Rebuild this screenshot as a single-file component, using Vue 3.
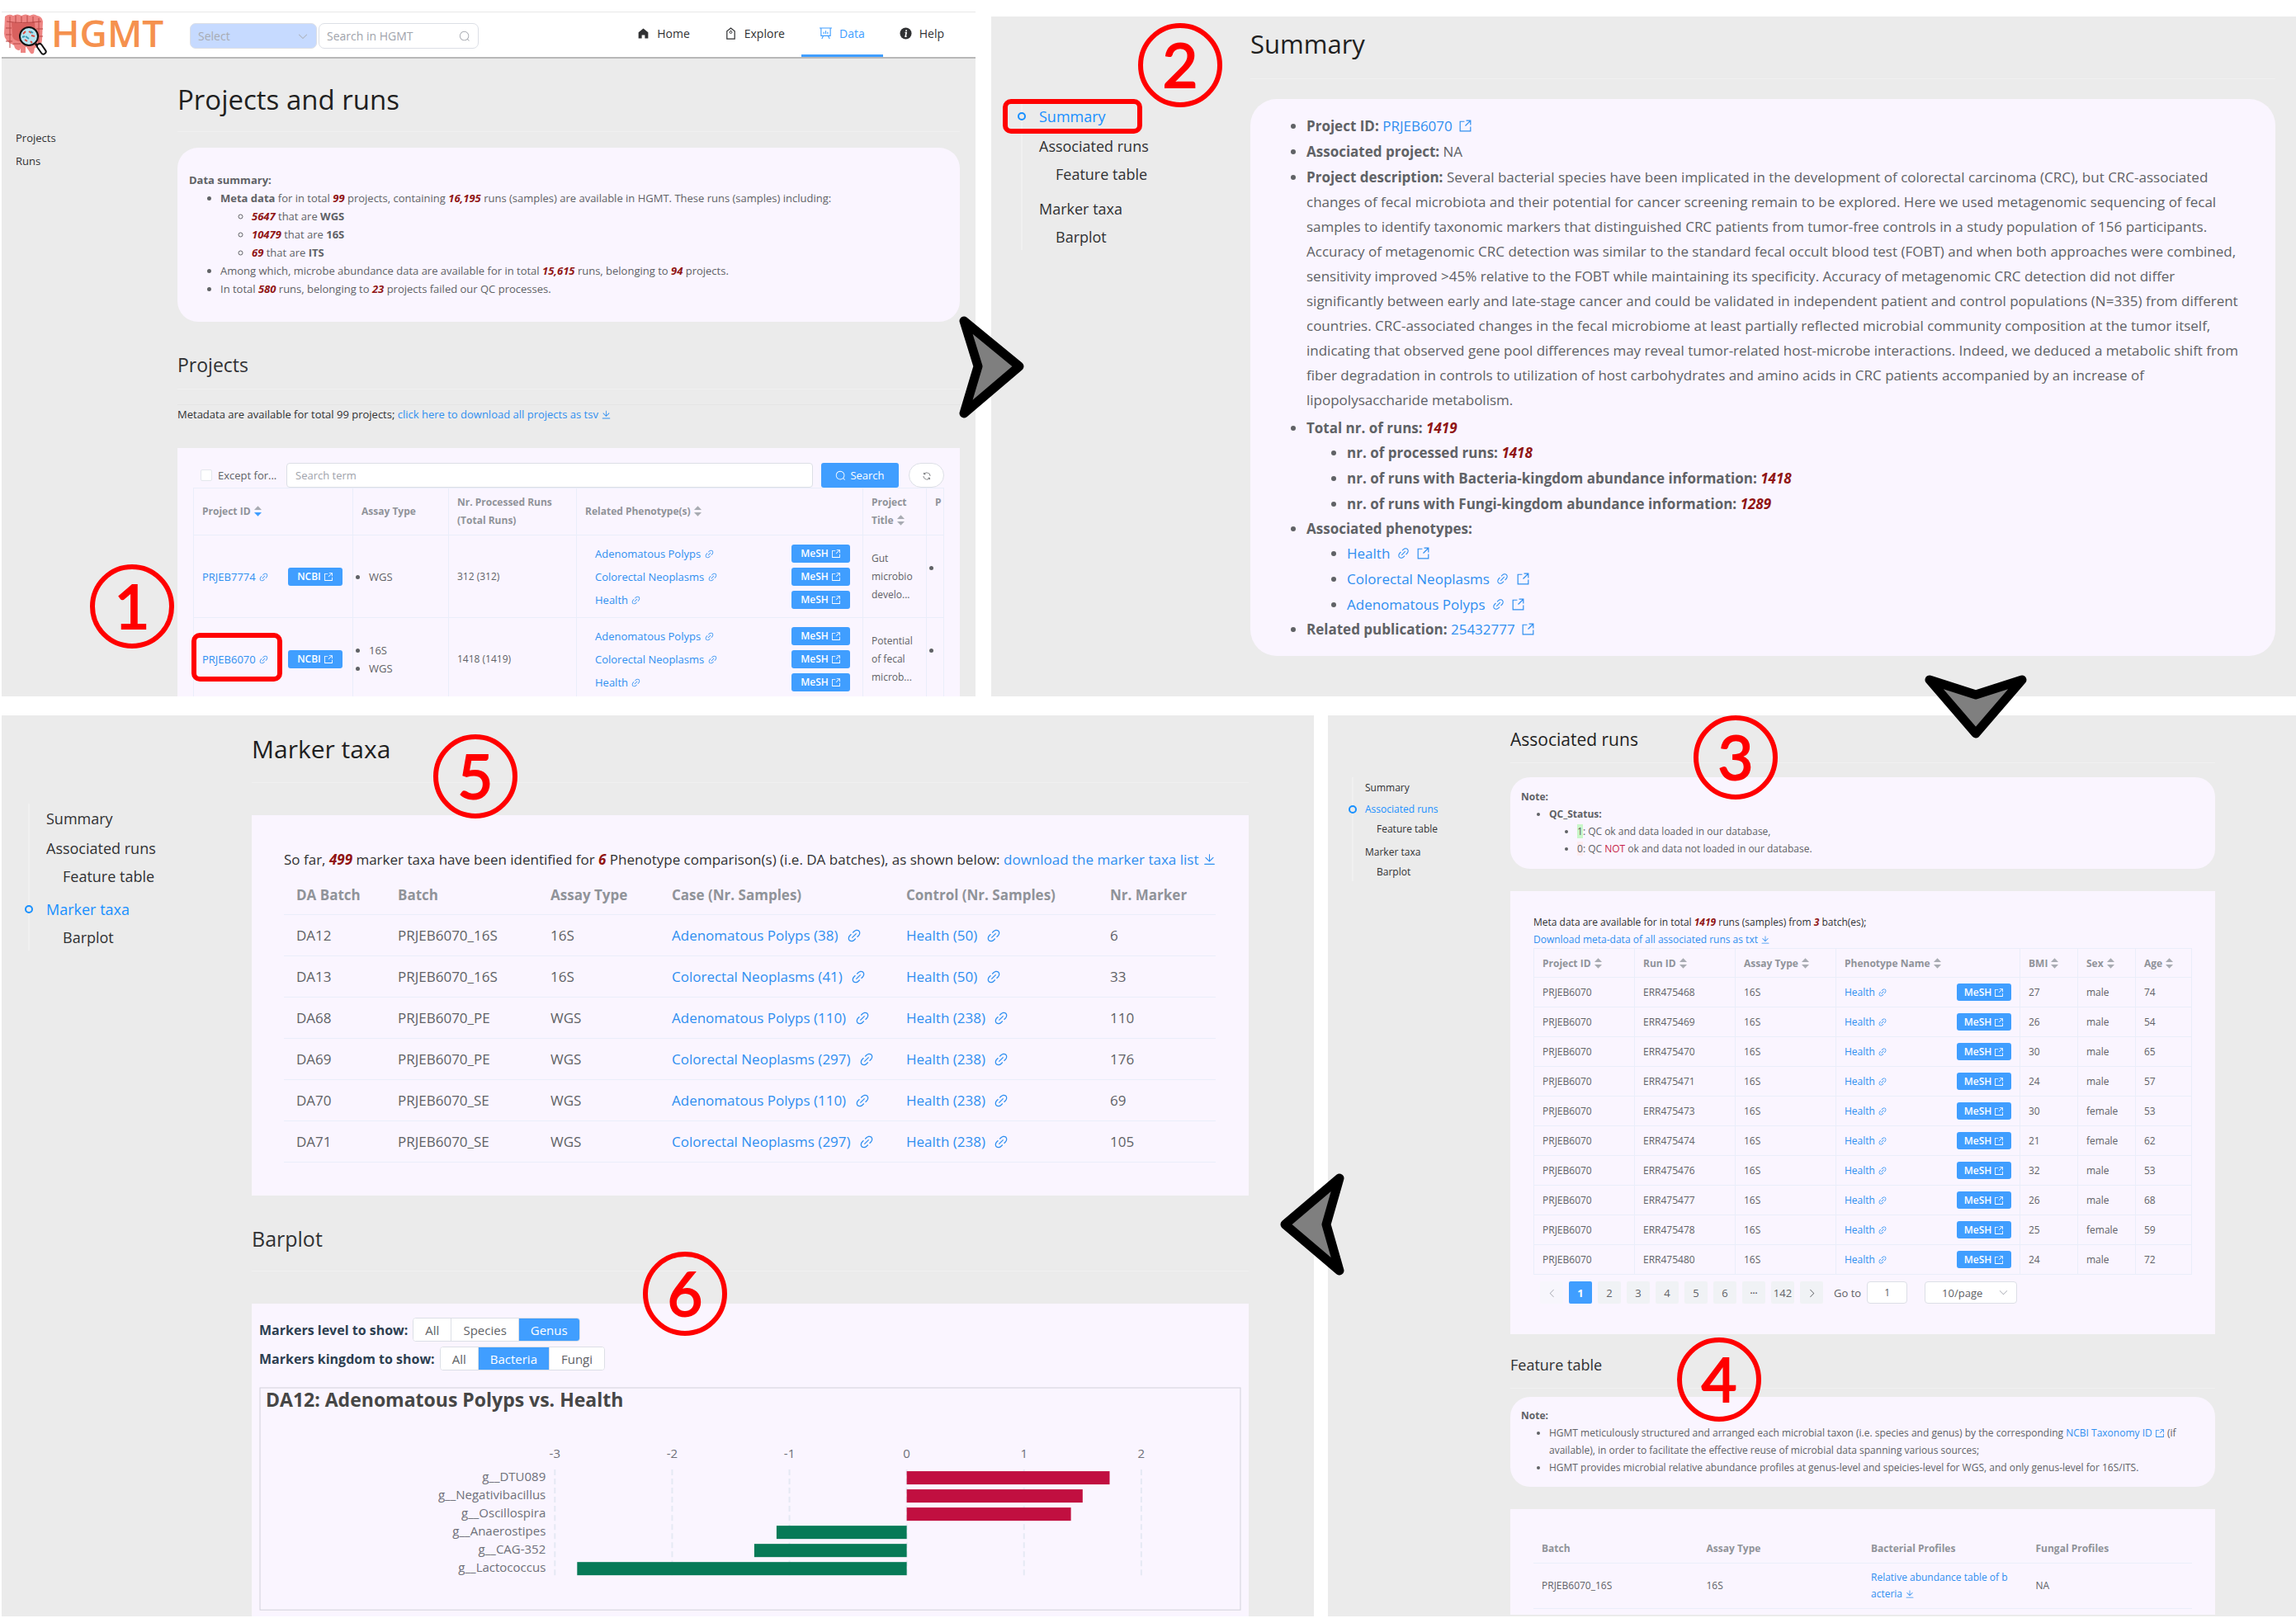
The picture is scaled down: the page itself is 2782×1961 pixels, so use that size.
<script setup>
import { h } from 'vue'

const glyphs = {
  link: 'M715.648 625.152 670.4 579.904l90.496-90.56c75.008-74.944 85.12-186.368 22.656-248.896-62.528-62.464-173.952-52.352-248.96 22.656L444.16 353.6l-45.248-45.248 90.496-90.496c100.032-99.968 251.968-110.08 339.456-22.656 87.488 87.488 77.312 239.424-22.656 339.456l-90.496 90.496zm-90.496 90.496-90.496 90.496C434.624 906.112 282.688 916.224 195.2 828.8c-87.488-87.488-77.312-239.424 22.656-339.456l90.496-90.496 45.248 45.248-90.496 90.56c-75.008 74.944-85.12 186.368-22.656 248.896 62.528 62.464 173.952 52.352 248.96-22.656l90.496-90.496 45.248 45.248zm0-362.048 45.248 45.248L398.848 670.4 353.6 625.152 625.152 353.6z',
  download: 'M160 832h704a32 32 0 1 1 0 64H160a32 32 0 1 1 0-64zm384-253.696 236.288-236.352 45.248 45.248L508.8 704 192 387.2l45.248-45.248L480 584.704V128h64v450.304z',
  search: 'm795.904 750.72 124.992 124.928a32 32 0 0 1-45.248 45.248L750.656 795.904a416 416 0 1 1 45.248-45.248zM480 832a352 352 0 1 0 0-704 352 352 0 0 0 0 704z',
  refresh: 'M771.776 794.88A384 384 0 0 1 128 512h64a320 320 0 0 0 555.712 216.448H654.72a32 32 0 1 1 0-64h149.056a32 32 0 0 1 32 32v148.928a32 32 0 1 1-64 0v-50.56zM276.288 295.616h92.992a32 32 0 0 1 0 64H220.16a32 32 0 0 1-32-32V178.56a32 32 0 0 1 64 0v50.56A384 384 0 0 1 896.128 512h-64a320 320 0 0 0-555.776-216.384z',
  down: 'M831.872 340.864 512 652.672 192.128 340.864a30.592 30.592 0 0 0-42.752 0 29.12 29.12 0 0 0 0 41.6L489.664 714.24a32 32 0 0 0 44.672 0l340.288-331.712a29.12 29.12 0 0 0 0-41.728 30.592 30.592 0 0 0-42.752 0z',
  external: 'M96 160h352v72H168v624h688V576h72v352H96zM576 96h352v352h-72V220L538 538l-52-52 318-318H576z',
  home: 'M512 96 112 420v508h272V640h256v288h272V420z'
}
const Icon = (props) =>
  h('svg', { class: 'ico', viewBox: '0 0 1024 1024', 'aria-hidden': 'true' }, [
    h('path', { d: glyphs[props.name], fill: 'currentColor' })
  ])
Icon.props = ['name']

const Sort = (props) =>
  h('svg', { class: 'sort', viewBox: '0 0 10 14', 'aria-hidden': 'true' }, [
    h('path', { d: 'M5 0 10 5.4H0z', fill: '#a8abb2' }),
    h('path', { d: 'M5 14 0 8.6h10z', fill: props.active ? '#409eff' : '#a8abb2' })
  ])
Sort.props = { active: Boolean }

const anchors = [
  { label: 'Summary' },
  { label: 'Associated runs' },
  { label: 'Feature table', sub: true },
  { label: 'Marker taxa' },
  { label: 'Barplot', sub: true }
]
const phenotypes = ['Adenomatous Polyps', 'Colorectal Neoplasms', 'Health']
const projects = [
  { id: 'PRJEB7774', assays: ['WGS'], runs: '312 (312)', title: ['Gut', 'microbio', 'develo...'] },
  { id: 'PRJEB6070', assays: ['16S', 'WGS'], runs: '1418 (1419)', title: ['Potential', 'of fecal', 'microb...'] }
]
const runs = [
  ['ERR475468', 27, 'male', 74],
  ['ERR475469', 26, 'male', 54],
  ['ERR475470', 30, 'male', 65],
  ['ERR475471', 24, 'male', 57],
  ['ERR475473', 30, 'female', 53],
  ['ERR475474', 21, 'female', 62],
  ['ERR475476', 32, 'male', 53],
  ['ERR475477', 26, 'male', 68],
  ['ERR475478', 25, 'female', 59],
  ['ERR475480', 24, 'male', 72]
]
const runColumns = ['Project ID', 'Run ID', 'Assay Type', 'Phenotype Name', 'BMI', 'Sex', 'Age']
const pages = ['2', '3', '4', '5', '6', '•••', '142']
const markers = [
  ['DA12', 'PRJEB6070_16S', '16S', 'Adenomatous Polyps (38)', 'Health (50)', 6],
  ['DA13', 'PRJEB6070_16S', '16S', 'Colorectal Neoplasms (41)', 'Health (50)', 33],
  ['DA68', 'PRJEB6070_PE', 'WGS', 'Adenomatous Polyps (110)', 'Health (238)', 110],
  ['DA69', 'PRJEB6070_PE', 'WGS', 'Colorectal Neoplasms (297)', 'Health (238)', 176],
  ['DA70', 'PRJEB6070_SE', 'WGS', 'Adenomatous Polyps (110)', 'Health (238)', 69],
  ['DA71', 'PRJEB6070_SE', 'WGS', 'Colorectal Neoplasms (297)', 'Health (238)', 105]
]
const zero = 784
const unit = 142
const ticks = [-3, -2, -1, 0, 1, 2]
const bars = [
  { name: 'g__DTU089', value: 1.73 },
  { name: 'g__Negativibacillus', value: 1.5 },
  { name: 'g__Oscillospira', value: 1.4 },
  { name: 'g__Anaerostipes', value: -1.11 },
  { name: 'g__CAG-352', value: -1.3 },
  { name: 'g__Lactococcus', value: -2.81 }
]
const levels = ['All', 'Species', 'Genus']
const kingdoms = ['All', 'Bacteria', 'Fungi']
</script>

<template>
  <div class="page">
    <div class="row row-top">
      <section class="panel projects">
        <header class="topbar">
          <a class="brand" href="#">
            <svg class="logo" viewBox="0 0 54 50" aria-hidden="true">
              <path d="M2 3q5-4 10-1 5-3 10 0 5-3 10 0 5-3 9 0 6 1 7 7l-1 22q0 9-9 10l-1 6q-3 3-5-1l-4-6q-7-1-8 4-6 0-7-6Q1 33 1 24z" fill="#ee8583" />
              <path d="M10 10q14 3 28-1l1 16q-3 9-15 8-11 1-13-6z" fill="#d8605e" />
              <path d="M4 9q18 3 42 0M8 3v38M15 2v9M22 3v8M29 2v9M36 3v8M43 5v33M3 17h7M3 25h7M3 33h8M40 18h8M39 27h9M12 36h27" stroke="#b94846" stroke-width="1" fill="none" />
              <path d="M24 33v14" stroke="#ee8583" stroke-width="6" />
              <circle cx="31" cy="27" r="11" fill="#b8e4f1" stroke="#111" stroke-width="2" />
              <path d="m24 24 3-3m4 0 3 2m-8 8 3 2m5-7 4 1m-5 6 2 2" stroke="#dd4c43" stroke-width="2" />
              <path d="m27 27 4 3m2-9 3 2m-10 4-3 1" stroke="#3b9db7" stroke-width="2" />
              <path d="m39 36 3 3" stroke="#111" stroke-width="3" />
              <rect x="41" y="36" width="6" height="14" rx="3" transform="rotate(-35 44 39)" fill="#fff" stroke="#111" stroke-width="2" />
            </svg>
            <span class="wordmark">HGMT</span>
          </a>
          <label class="field scope">
            <select aria-label="Scope"><option>Select</option></select>
            <Icon name="down" />
          </label>
          <label class="field finder">
            <input type="text" placeholder="Search in HGMT" aria-label="Search in HGMT" />
            <Icon name="search" />
          </label>
          <nav class="menu">
            <a href="#"><Icon name="home" />Home</a>
            <a href="#">
              <svg class="ico" viewBox="0 0 16 16" aria-hidden="true"><path d="M3 15V5l5-4 5 4v10zM8 4v1" fill="none" stroke="currentColor" stroke-width="1.3" /><circle cx="8" cy="6.500" r="1.500" fill="none" stroke="currentColor" /></svg>Explore</a>
            <a href="#" class="current">
              <svg class="ico" viewBox="0 0 16 16" aria-hidden="true"><path d="M0 1h16M2 1v10h12V1M5 11l-2 4m8-4 2 4M5.500 8.500V6M8 8.500V4.500m2.500 4V6" fill="none" stroke="currentColor" stroke-width="1.2" /></svg>Data</a>
            <a href="#">
              <svg class="ico" viewBox="0 0 16 16" aria-hidden="true"><circle cx="8" cy="8" r="7.500" fill="currentColor" /><path d="M8.600 3.500v1.800M7 7h1.700L7.600 12h1.600" fill="none" stroke="#fff" stroke-width="1.700" /></svg>Help</a>
          </nav>
        </header>
        <div class="body">
          <nav class="side plain">
            <a href="#">Projects</a>
            <a href="#">Runs</a>
          </nav>
          <main class="content">
            <h1 class="title">Projects and runs</h1>
            <div class="note">
              <b>Data summary:</b>
              <ul>
                <li><b>Meta data</b> for in total <em>99</em> projects, containing <em>16,195</em> runs (samples) are available in HGMT. These runs (samples) including:
                  <ul>
                    <li><em>5647</em> that are <b>WGS</b></li>
                    <li><em>10479</em> that are <b>16S</b></li>
                    <li><em>69</em> that are <b>ITS</b></li>
                  </ul>
                </li>
                <li>Among which, microbe abundance data are available for in total <em>15,615</em> runs, belonging to <em>94</em> projects.</li>
                <li>In total <em>580</em> runs, belonging to <em>23</em> projects failed our QC processes.</li>
              </ul>
            </div>
            <h2 class="subtitle">Projects</h2>
            <p class="meta">Metadata are available for total 99 projects; <a href="#">click here to download all projects as tsv <Icon name="download" /></a></p>
            <div class="card">
              <form class="toolbar" @submit.prevent>
                <label class="except"><input type="checkbox" />Except for...</label>
                <input class="term" type="text" placeholder="Search term" aria-label="Search term" />
                <button class="primary" type="submit"><Icon name="search" />Search</button>
                <button class="round" type="button" aria-label="Refresh"><Icon name="refresh" /></button>
              </form>
              <table class="grid">
                <colgroup>
                  <col class="w-id" /><col class="w-assay" /><col class="w-nr" /><col /><col class="w-title" /><col class="w-cut" />
                </colgroup>
                <thead>
                  <tr>
                    <th>Project ID <Sort active /></th>
                    <th>Assay Type</th>
                    <th>Nr. Processed Runs<br />(Total Runs)</th>
                    <th>Related Phenotype(s) <Sort /></th>
                    <th>Project<br />Title <Sort /></th>
                    <th class="cut">P<br />&nbsp;</th>
                  </tr>
                </thead>
                <tbody>
                  <tr v-for="p in projects" :key="p.id">
                    <td>
                      <div class="split"><a href="#">{{ p.id }} <Icon name="link" /></a><button class="tag" type="button">NCBI<Icon name="external" /></button></div>
                    </td>
                    <td><ul class="assays"><li v-for="a in p.assays" :key="a">{{ a }}</li></ul></td>
                    <td>{{ p.runs }}</td>
                    <td>
                      <div v-for="n in phenotypes" :key="n" class="split pheno"><a href="#">{{ n }} <Icon name="link" /></a><button class="tag" type="button">MeSH<Icon name="external" /></button></div>
                    </td>
                    <td><div v-for="t in p.title" :key="t">{{ t }}</div></td>
                    <td class="cut"><ul class="assays"><li>&nbsp;</li></ul></td>
                  </tr>
                </tbody>
              </table>
            </div>
          </main>
        </div>
        <span class="frame frame-id"></span>
        <span class="step s1">1</span>
      </section>

      <section class="panel summary">
        <div class="body">
          <nav class="side">
            <ul>
              <li v-for="a in anchors" :key="a.label" :class="{ sub: a.sub, on: a.label === 'Summary' }"><a href="#">{{ a.label }}</a></li>
            </ul>
          </nav>
          <main class="content">
            <h1 class="title">Summary</h1>
            <div class="note">
              <ul>
                <li><b>Project ID:</b> <a href="#">PRJEB6070 <Icon name="external" /></a></li>
                <li><b>Associated project:</b> NA</li>
                <li class="long"><b>Project description:</b> Several bacterial species have been implicated in the development of colorectal carcinoma (CRC), but CRC-associated<br />
                  changes of fecal microbiota and their potential for cancer screening remain to be explored. Here we used metagenomic sequencing of fecal<br />
                  samples to identify taxonomic markers that distinguished CRC patients from tumor-free controls in a study population of 156 participants.<br />
                  Accuracy of metagenomic CRC detection was similar to the standard fecal occult blood test (FOBT) and when both approaches were combined,<br />
                  sensitivity improved &gt;45% relative to the FOBT while maintaining its specificity. Accuracy of metagenomic CRC detection did not differ<br />
                  significantly between early and late-stage cancer and could be validated in independent patient and control populations (N=335) from different<br />
                  countries. CRC-associated changes in the fecal microbiome at least partially reflected microbial community composition at the tumor itself,<br />
                  indicating that observed gene pool differences may reveal tumor-related host-microbe interactions. Indeed, we deduced a metabolic shift from<br />
                  fiber degradation in controls to utilization of host carbohydrates and amino acids in CRC patients accompanied by an increase of<br />
                  lipopolysaccharide metabolism.</li>
                <li><b>Total nr. of runs:</b> <em>1419</em>
                  <ul>
                    <li><b>nr. of processed runs:</b> <em>1418</em></li>
                    <li><b>nr. of runs with Bacteria-kingdom abundance information:</b> <em>1418</em></li>
                    <li><b>nr. of runs with Fungi-kingdom abundance information:</b> <em>1289</em></li>
                  </ul>
                </li>
                <li><b>Associated phenotypes:</b>
                  <ul>
                    <li v-for="n in ['Health', 'Colorectal Neoplasms', 'Adenomatous Polyps']" :key="n"><a href="#">{{ n }} <Icon name="link" /></a> <a href="#" :aria-label="n + ' in MeSH'"><Icon name="external" /></a></li>
                  </ul>
                </li>
                <li><b>Related publication:</b> <a href="#">25432777 <Icon name="external" /></a></li>
              </ul>
            </div>
          </main>
        </div>
        <span class="frame frame-nav"></span>
        <span class="step s2">2</span>
      </section>
    </div>

    <div class="row row-bottom">
      <section class="panel taxa">
        <div class="body">
          <nav class="side">
            <ul>
              <li v-for="a in anchors" :key="a.label" :class="{ sub: a.sub, on: a.label === 'Marker taxa' }"><a href="#">{{ a.label }}</a></li>
            </ul>
          </nav>
          <main class="content">
            <h1 class="title">Marker taxa</h1>
            <div class="card found">
              <p>So far, <em>499</em> marker taxa have been identified for <em>6</em> Phenotype comparison(s) (i.e. DA batches), as shown below: <a href="#">download the marker taxa list <Icon name="download" /></a></p>
              <table class="lines">
                <colgroup>
                  <col class="m1" /><col class="m2" /><col class="m3" /><col class="m4" /><col class="m5" /><col />
                </colgroup>
                <thead>
                  <tr><th>DA Batch</th><th>Batch</th><th>Assay Type</th><th>Case (Nr. Samples)</th><th>Control (Nr. Samples)</th><th>Nr. Marker</th></tr>
                </thead>
                <tbody>
                  <tr v-for="m in markers" :key="m[0]">
                    <td>{{ m[0] }}</td>
                    <td>{{ m[1] }}</td>
                    <td>{{ m[2] }}</td>
                    <td><a href="#">{{ m[3] }} <Icon name="link" /></a></td>
                    <td><a href="#">{{ m[4] }} <Icon name="link" /></a></td>
                    <td>{{ m[5] }}</td>
                  </tr>
                </tbody>
              </table>
            </div>
            <h2 class="subtitle">Barplot</h2>
            <div class="card plot">
              <div class="choice" role="group" aria-label="Markers level to show">
                <b>Markers level to show:</b>
                <span class="segments"><button v-for="l in levels" :key="l" type="button" :class="{ on: l === 'Genus' }">{{ l }}</button></span>
              </div>
              <div class="choice" role="group" aria-label="Markers kingdom to show">
                <b>Markers kingdom to show:</b>
                <span class="segments"><button v-for="k in kingdoms" :key="k" type="button" :class="{ on: k === 'Bacteria' }">{{ k }}</button></span>
              </div>
              <svg class="chart" viewBox="0 0 1189 271">
                <rect x="1" y="1" width="1187" height="269" fill="none" stroke="#d2d2da" stroke-width="1" />
                <text class="chart-title" x="8" y="24">DA12: Adenomatous Polyps vs. Health</text>
                <g v-for="t in ticks" :key="t">
                  <text class="tick" :x="zero + t * unit" y="86">{{ t }}</text>
                  <line :x1="zero + t * unit" :x2="zero + t * unit" y1="100" y2="231" stroke="#e5e9f4" stroke-width="2" stroke-dasharray="7 4" />
                </g>
                <g v-for="(b, i) in bars" :key="b.name">
                  <text class="name" x="347" :y="114 + i * 22">{{ b.name }}</text>
                  <rect :x="b.value > 0 ? zero : zero + b.value * unit" :y="102 + i * 22" :width="Math.abs(b.value) * unit" height="16" :fill="b.value > 0 ? '#c10f40' : '#077a57'" />
                </g>
              </svg>
            </div>
          </main>
        </div>
        <span class="step s5">5</span>
        <span class="step s6">6</span>
      </section>

      <section class="panel runs">
        <div class="body">
          <nav class="side">
            <ul>
              <li v-for="a in anchors" :key="a.label" :class="{ sub: a.sub, on: a.label === 'Associated runs' }"><a href="#">{{ a.label }}</a></li>
            </ul>
          </nav>
          <main class="content">
            <h1 class="title">Associated runs</h1>
            <div class="note">
              <b>Note:</b>
              <ul>
                <li><b>QC_Status:</b>
                  <ul>
                    <li><span class="ok">1</span>: QC ok and data loaded in our database,</li>
                    <li><span class="zero">0</span>: QC <span class="not">NOT</span> ok and data not loaded in our database.</li>
                  </ul>
                </li>
              </ul>
            </div>
            <div class="card list">
              <p>Meta data are available for in total <em>1419</em> runs (samples) from <em>3</em> batch(es);<br />
                <a href="#">Download meta-data of all associated runs as txt <Icon name="download" /></a></p>
              <table class="grid">
                <colgroup>
                  <col class="r1" /><col class="r1" /><col class="r1" /><col /><col class="r2" /><col class="r2" /><col class="r3" />
                </colgroup>
                <thead>
                  <tr><th v-for="c in runColumns" :key="c">{{ c }} <Sort /></th></tr>
                </thead>
                <tbody>
                  <tr v-for="r in runs" :key="r[0]">
                    <td>PRJEB6070</td>
                    <td>{{ r[0] }}</td>
                    <td>16S</td>
                    <td><div class="split"><a href="#">Health <Icon name="link" /></a><button class="tag" type="button">MeSH<Icon name="external" /></button></div></td>
                    <td>{{ r[1] }}</td>
                    <td>{{ r[2] }}</td>
                    <td>{{ r[3] }}</td>
                  </tr>
                </tbody>
              </table>
              <div class="pager">
                <button type="button" class="edge off" aria-label="Previous page"><Icon name="down" /></button>
                <button type="button" class="on">1</button>
                <button v-for="p in pages" :key="p" type="button" :class="{ dots: p === '•••' }">{{ p }}</button>
                <button type="button" class="edge next" aria-label="Next page"><Icon name="down" /></button>
                <label class="goto">Go to<input type="text" value="1" /></label>
                <label class="size"><select aria-label="Page size"><option>10/page</option></select><Icon name="down" /></label>
              </div>
            </div>
            <h2 class="subtitle">Feature table</h2>
            <div class="note">
              <b>Note:</b>
              <ul>
                <li>HGMT meticulously structured and arranged each microbial taxon (i.e. species and genus) by the corresponding <a href="#">NCBI Taxonomy ID <Icon name="external" /></a> (if<br />available), in order to facilitate the effective reuse of microbial data spanning various sources;</li>
                <li>HGMT provides microbial relative abundance profiles at genus-level and speicies-level for WGS, and only genus-level for 16S/ITS.</li>
              </ul>
            </div>
            <div class="card profiles">
              <table class="lines">
                <thead>
                  <tr><th>Batch</th><th>Assay Type</th><th>Bacterial Profiles</th><th>Fungal Profiles</th></tr>
                </thead>
                <tbody>
                  <tr>
                    <td>PRJEB6070_16S</td>
                    <td>16S</td>
                    <td><a href="#">Relative abundance table of b<br />acteria <Icon name="download" /></a></td>
                    <td>NA</td>
                  </tr>
                </tbody>
              </table>
            </div>
          </main>
        </div>
        <span class="step s3">3</span>
        <span class="step s4">4</span>
      </section>
    </div>

    <svg class="arrow a1" viewBox="0 0 80 124" aria-hidden="true"><path d="M7 6 74 61 7 118 24 61z" /></svg>
    <svg class="arrow a2" viewBox="0 0 124 78" aria-hidden="true"><path d="M6 6 62 71 118 6 62 24z" /></svg>
    <svg class="arrow a3" viewBox="0 0 78 124" aria-hidden="true"><path d="M72 6 6 62 72 118 56 62z" /></svg>
  </div>
</template>

<style>
body {
  margin: 0;
  background: #fff;
}
</style>

<style scoped>
* {
  box-sizing: border-box;
}
.page {
  position: relative;
  padding: 14px 0 2px 2px;
  display: flex;
  flex-direction: column;
  gap: 23px;
  background: #fff;
  color: #303133;
  font-family: 'Open Sans', 'Noto Sans', sans-serif;
  overflow: hidden;
}
.row {
  display: grid;
}
.row-top {
  grid-template-columns: minmax(0, 1180fr) minmax(0, 1581fr);
  column-gap: 19px;
}
.row-bottom {
  grid-template-columns: minmax(0, 1590fr) minmax(0, 1173fr);
  column-gap: 17px;
}
.panel {
  position: relative;
  background: #ebebeb;
  white-space: nowrap;
}
.body {
  display: flex;
  overflow: hidden;
}
.content {
  flex: 1;
  min-width: 0;
}
h1,
h2,
p,
ul {
  margin: 0;
  padding: 0;
  font-weight: 400;
}
ul {
  list-style: disc;
}
a {
  color: #2f8ff0;
  text-decoration: none;
}
b {
  font-weight: 700;
}
em {
  color: #901414;
  font-weight: 700;
}
button,
input,
select {
  font: inherit;
  margin: 0;
}
.ico {
  width: 1em;
  height: 1em;
  vertical-align: -2px;
}
.sort {
  width: 9px;
  height: 13px;
  margin-left: 1px;
  vertical-align: -2px;
}
.title {
  color: #1f1f1f;
  border-bottom: 1px solid #f0f0f0;
}
.subtitle {
  color: #303133;
  border-bottom: 1px solid #f0f0f0;
}
.note {
  background: #faf5ff;
  color: #606266;
}
.card {
  background: #faf5ff;
}
table {
  width: 100%;
  table-layout: fixed;
  border-collapse: separate;
  border-spacing: 0;
  color: #606266;
}
th {
  color: #909399;
  font-weight: 700;
  text-align: left;
}
th,
td {
  padding: 0 0 0 10px;
  border-bottom: 1px solid #eaeefa;
}
.grid {
  border-top: 1px solid #eaeefa;
  border-left: 1px solid #eaeefa;
}
.grid th,
.grid td {
  border-right: 1px solid #eaeefa;
}
.split {
  display: flex;
  align-items: center;
  justify-content: space-between;
}
.tag {
  display: flex;
  align-items: center;
  justify-content: center;
  gap: 3px;
  padding: 0;
  border: 0;
  border-radius: 3px;
  background: #409eff;
  color: #fff;
  font-size: 12px;
  font-weight: 600;
}

/* side anchors */
.side {
  flex: none;
}
.side ul {
  list-style: none;
  border-left: 2px solid #f0f0f0;
}
.side li {
  position: relative;
  line-height: var(--top);
}
.side li.sub {
  line-height: var(--sub);
  margin-bottom: var(--gap);
}
.side a {
  color: #303133;
}
.side .on a {
  color: #1890ff;
}
.side .on::before {
  content: '';
  box-sizing: border-box;
  position: absolute;
  top: 50%;
  left: -1px;
  width: 10px;
  height: 10px;
  transform: translate(-50%, -50%);
  border: 2px solid #1890ff;
  border-radius: 50%;
  background: #ebebeb;
}

/* overlays */
.step {
  position: absolute;
  width: 102px;
  height: 102px;
  border: 6px solid #f00;
  border-radius: 50%;
  color: #f00;
  font: 400 74px/88px Lato, sans-serif;
  -webkit-text-stroke: 2px #f00;
  text-align: center;
}
.s1 { left: 107px; top: 670px; }
.s2 { left: 178px; top: 8px; }
.s3 { left: 443px; top: 0; }
.s4 { left: 423px; top: 754px; }
.s5 { left: 523px; top: 23px; }
.s6 { left: 777px; top: 650px; }
.frame {
  position: absolute;
  border: 6px solid #f00;
  border-radius: 10px;
}
.frame-id { left: 230px; top: 753px; width: 110px; height: 59px; }
.frame-nav { left: 14px; top: 100px; width: 169px; height: 42px; }
.arrow {
  position: absolute;
  fill: #7f7f7f;
  stroke: #000;
  stroke-width: 11px;
  stroke-linejoin: round;
}
.a1 { left: 1161px; top: 383px; width: 80px; height: 124px; }
.a2 { left: 2332px; top: 818px; width: 124px; height: 78px; }
.a3 { left: 1551px; top: 1422px; width: 78px; height: 124px; }

/* projects */
.topbar {
  display: flex;
  align-items: center;
  height: 57px;
  padding: 0 38px 0 2px;
  background: #fff;
  border-top: 1px solid #e8e8e8;
  border-bottom: 2px solid #b8b8b8;
}
.brand {
  display: flex;
  align-items: center;
  gap: 4px;
  width: 226px;
}
.logo {
  width: 54px;
  height: 50px;
}
.wordmark {
  color: #f5914e;
  font: 600 46px/50px 'Open Sans', sans-serif;
  margin-top: -7px;
}
.field {
  position: relative;
  height: 31px;
  margin: 3px 2px 0 0;
  font-size: 14px;
}
.field select,
.field input {
  width: 100%;
  height: 100%;
  padding: 0 9px;
  border: 1px solid #dcdfe6;
  border-radius: 7px;
  background: #fff;
  appearance: none;
  color: #a8abb2;
}
.field select {
  background: #c6daff;
}
.field .ico {
  position: absolute;
  right: 10px;
  top: 9px;
  color: #a8abb2;
}
.scope { width: 154px; }
.finder { width: 194px; }
input::placeholder {
  color: #a0a3ab;
  opacity: 1;
}
.menu {
  display: flex;
  align-items: stretch;
  height: 54px;
  margin-left: auto;
}
.menu a {
  display: flex;
  align-items: center;
  gap: 9px;
  margin-left: 18px;
  padding: 0 12px;
  font-size: 14px;
  color: #303133;
  border-bottom: 3px solid transparent;
}
.menu a:last-child {
  padding-right: 0;
}
.menu .current {
  color: #409eff;
  border-color: #409eff;
  padding: 0 22px;
  margin: 0 -10px 0 8px;
}
.menu .ico {
  width: 15px;
  height: 15px;
}
.projects .side {
  display: flex;
  flex-direction: column;
  width: 213px;
  padding: 82px 0 0 17px;
  font-size: 13px;
  line-height: 28px;
}
.projects .content {
  margin: 0 19px -5px 0;
  font-size: 13px;
}
.projects .title {
  padding: 30px 0 18px;
  font-size: 33px;
  line-height: 40px;
}
.projects .note {
  margin-top: 19px;
  padding: 28px 14px 29px;
  border-radius: 25px;
  line-height: 22px;
}
.projects .note > ul {
  padding-left: 38px;
}
.projects .note ul ul {
  list-style: circle;
  padding-left: 38px;
}
.projects .subtitle {
  margin-top: 36px;
  padding-bottom: 13px;
  font-size: 23px;
  line-height: 32px;
}
.meta {
  margin-top: 18px;
  border-top: 1px solid #e4e4e4;
  padding-top: 1px;
  line-height: 20px;
}
.projects .card {
  margin-top: 31px;
  padding: 18px 19px 0;
}
.toolbar {
  display: flex;
  align-items: center;
  height: 30px;
  font-size: 13px;
}
.except {
  display: flex;
  align-items: center;
  gap: 7px;
  width: 113px;
  padding-left: 9px;
  color: #606266;
}
.except input {
  width: 14px;
  height: 14px;
  appearance: none;
  border: 1px solid #e4e7ed;
  border-radius: 2px;
  background: #fff;
}
.term {
  flex: 1;
  min-width: 0;
  height: 30px;
  padding: 0 10px;
  border: 1px solid #dcdfe6;
  border-radius: 4px;
  background: #fff;
}
.primary {
  display: flex;
  align-items: center;
  justify-content: center;
  gap: 5px;
  width: 94px;
  height: 30px;
  margin-left: 10px;
  border: 0;
  border-radius: 3px;
  background: #409eff;
  color: #fff;
}
.round {
  width: 43px;
  height: 30px;
  margin-left: 12px;
  border: 1px solid #dcdfe6;
  border-radius: 15px;
  background: #fff;
  color: #606266;
  font-size: 12px;
}
.projects td,
.projects th {
  line-height: 22px;
}
.projects th {
  height: 57px;
  font-size: 12px;
}
.projects td {
  height: 100px;
}
.projects td:nth-child(5),
.projects td:nth-child(3) {
  font-size: 12px;
}
.w-id { width: 193px; }
.w-assay { width: 116px; }
.w-nr { width: 155px; }
.w-title { width: 77px; }
.w-cut { width: 21px; }
.grid .cut {
  overflow: hidden;
}
.cut ul {
  margin-top: -22px;
}
.projects td > .split {
  padding-right: 12px;
}
.projects td > .pheno {
  height: 28px;
  padding: 0 15px 0 12px;
}
.projects .tag {
  width: 66px;
  height: 22px;
}
.projects .pheno .tag {
  width: 71px;
}
.assays {
  padding-left: 9px;
}

/* summary */
.summary {
  margin-top: 6px;
  --top: 36px;
  --sub: 32px;
  --gap: 8px;
  font-size: 17px;
}
.summary .side {
  width: 314px;
  padding: 103px 0 0 36px;
  font-size: 18px;
}
.summary .side li,
.taxa .side li {
  padding-left: 20px;
}
.summary .side li.sub,
.taxa .side li.sub {
  padding-left: 40px;
}
.summary .content {
  margin-right: 25px;
}
.summary .title {
  padding: 11px 0 20px;
  font-size: 31px;
  line-height: 44px;
}
.summary .note {
  margin-top: 24px;
  padding: 18px 0 16px 68px;
  border-radius: 32px;
}
.summary .note li {
  line-height: 30px;
  margin-bottom: 1px;
}
.summary .note .long {
  margin-bottom: 4px;
}
.summary .note ul ul {
  padding-left: 49px;
  margin-bottom: -1px;
}
.summary .note .ico {
  margin-left: 3px;
}

/* marker taxa */
.taxa {
  --top: 36px;
  --sub: 32px;
  --gap: 6px;
  font-size: 17px;
}
.taxa .side {
  width: 303px;
  padding: 107px 0 0 32px;
  font-size: 18px;
}
.taxa .content {
  margin-right: 79px;
}
.taxa .title {
  padding: 21px 0 20px;
  font-size: 30px;
  line-height: 40px;
}
.found {
  margin-top: 39px;
  padding: 41px 40px 40px 39px;
}
.found p {
  line-height: 26px;
  margin-bottom: 5px;
}
.found th {
  height: 49px;
}
.found td {
  height: 50px;
}
.found th,
.found td {
  padding-left: 15px;
}
.m1 { width: 123px; }
.m2 { width: 185px; }
.m3 { width: 147px; }
.m4 { width: 284px; }
.m5 { width: 247px; }
.found td .ico {
  width: 20px;
  height: 20px;
  margin-left: 5px;
  vertical-align: -4px;
}
.taxa .subtitle {
  margin-top: 34px;
  padding-bottom: 21px;
  font-size: 25px;
  line-height: 36px;
}
.plot {
  margin-top: 39px;
  padding: 17px 9px 7px;
}
.choice {
  display: flex;
  align-items: center;
  gap: 6px;
  height: 29px;
  margin-bottom: 6px;
  font-size: 16px;
  color: #2c3e50;
}
.segments {
  display: flex;
  height: 29px;
  border: 1px solid #dcdfe6;
  border-radius: 4px;
  background: #fff;
  overflow: hidden;
}
.segments button {
  padding: 0 14px;
  border: 0;
  border-right: 1px solid #dcdfe6;
  background: #fff;
  color: #606266;
  font-size: 15px;
}
.segments button:last-child {
  border-right: 0;
}
.segments .on {
  background: #409eff;
  color: #fff;
}
.chart {
  display: block;
  width: 100%;
  margin-top: 20px;
}
.chart text {
  fill: #6e7079;
  font-size: 15px;
}
.chart .chart-title {
  fill: #464646;
  font-size: 23px;
  font-weight: 700;
}
.tick {
  text-anchor: middle;
}
.name {
  text-anchor: end;
}

/* associated runs */
.runs {
  --top: 26px;
  --sub: 22px;
  --gap: 4px;
  font-size: 12px;
}
.runs .side {
  width: 221px;
  padding: 75px 0 0 29px;
}
.runs .side li {
  padding-left: 14px;
}
.runs .side li.sub {
  padding-left: 28px;
}
.runs .content {
  margin-right: 98px;
}
.runs .title {
  padding: 14px 0 13px;
  font-size: 21px;
  line-height: 30px;
}
.runs .note {
  margin-top: 17px;
  padding: 13px 13px 14px;
  border-radius: 24px;
  line-height: 21px;
}
.runs .note ul {
  padding-left: 34px;
}
.runs .subtitle + .note {
  margin-top: 10px;
  padding: 12px 13px 13px;
}
.ok {
  background: #c9f7c9;
}
.zero {
  background: #fdecef;
}
.not {
  color: #c71f4b;
}
.list {
  margin-top: 27px;
  padding: 27px 28px 37px;
}
.list p {
  line-height: 21px;
}
.runs .grid th {
  height: 35px;
}
.runs .grid td {
  height: 36px;
}
.r1 { width: 122px; }
.r2 { width: 70px; }
.r3 { width: 68px; }
.runs .split {
  padding-right: 10px;
}
.runs .tag {
  width: 66px;
  height: 21px;
}
.pager {
  display: flex;
  gap: 7px;
  height: 27px;
  margin: 8px 0 0 8px;
  font-size: 13px;
  color: #606266;
}
.pager button {
  width: 28px;
  padding: 0;
  border: 0;
  border-radius: 2px;
  background: #f0f2f5;
  color: #606266;
}
.pager .on {
  background: #409eff;
  color: #fff;
  font-weight: 700;
}
.pager .dots {
  font-size: 8px;
}
.pager .off {
  background: #f7f6fc;
  color: #a8abb2;
}
.edge .ico {
  transform: rotate(90deg);
}
.next .ico {
  transform: rotate(-90deg);
}
.goto {
  display: flex;
  align-items: center;
  gap: 7px;
  margin-left: 6px;
}
.goto input {
  width: 49px;
  height: 27px;
  padding: 0;
  border: 1px solid #dcdfe6;
  border-radius: 4px;
  background: #fff;
  color: #606266;
  font-size: 12px;
  text-align: center;
}
.size {
  position: relative;
  width: 112px;
  margin-left: 14px;
}
.size select {
  width: 100%;
  height: 27px;
  padding: 0 20px;
  border: 1px solid #dcdfe6;
  border-radius: 4px;
  background: #fff;
  appearance: none;
  color: #606266;
}
.size .ico {
  position: absolute;
  right: 10px;
  top: 7px;
  color: #a8abb2;
}
.runs .subtitle {
  margin-top: 23px;
  padding-bottom: 14px;
  font-size: 18px;
  line-height: 28px;
}
.profiles {
  margin-top: 27px;
  padding: 30px 28px 7px;
}
.profiles th {
  height: 36px;
}
.profiles td {
  height: 55px;
  line-height: 20px;
}
</style>
